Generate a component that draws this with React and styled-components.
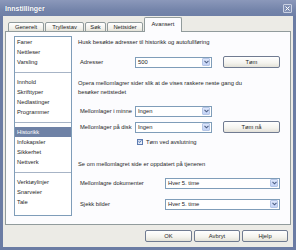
import styled, { createGlobalStyle } from "styled-components";

const GlobalStyle = createGlobalStyle`
  html, body {
    margin: 0;
    padding: 0;
    background: #ffffff;
  }

  body {
    font-family: "Liberation Sans", Arial, sans-serif;
    font-size: 5.8px;
    color: #1e1e1e;
  }

  * {
    box-sizing: border-box;
  }
`;

const Window = styled.div`
  width: 296px;
  height: 250px;
  display: flex;
  flex-direction: column;
  padding: 0 3px 3px;
  background: #6b7ca4;
`;

const TitleBar = styled.div`
  height: 16px;
  flex-shrink: 0;
  margin: 0 -3px;
  padding: 0 4px 0 5px;
  display: flex;
  align-items: center;
  justify-content: space-between;
  background: linear-gradient(#8b98ba, #7585ab 60%, #6e7fa6);
`;

const Title = styled.span`
  font-size: 7px;
  font-weight: bold;
  color: #ffffff;
  text-shadow: 0 0 1px #4b5b82;
`;

const CloseButton = styled.div`
  width: 9px;
  height: 9px;
  border: 1px solid #c9d0e2;
  border-radius: 1px;
  background: #8190b4;
  display: flex;
  align-items: center;
  justify-content: center;

  svg {
    width: 5px;
    height: 5px;
  }
`;

const Body = styled.div`
  flex: 1;
  display: flex;
  flex-direction: column;
  padding: 2px 2px 4px;
  background: #ecebe6;
`;

const TabStrip = styled.div`
  height: 14px;
  display: flex;
  align-items: flex-end;
  padding-left: 3px;
  position: relative;
  z-index: 1;
  margin-bottom: -1px;
`;

const Tab = styled.div`
  width: ${(p) => p.$width}px;
  height: ${(p) => (p.$active ? 15 : 10)}px;
  margin-right: ${(p) => (p.$active ? 0 : 1)}px;
  display: flex;
  align-items: center;
  justify-content: center;
  padding-bottom: ${(p) => (p.$active ? 2 : 0)}px;
  border: 1px solid #919b9c;
  border-bottom: ${(p) => (p.$active ? "none" : "1px solid #919b9c")};
  border-radius: 2px 2px 0 0;
  background: ${(p) =>
    p.$active ? "#fcfcfe" : "linear-gradient(#ffffff, #f1f0ea 70%, #e4e2d8)"};
  color: #222222;
  white-space: nowrap;
`;

const Panel = styled.div`
  height: 194px;
  display: flex;
  gap: 6px;
  padding: 4px 10px 0 8px;
  border: 1px solid #919b9c;
  background: #fcfcfe;
`;

const CategoryList = styled.div`
  width: 58px;
  height: 180px;
  flex-shrink: 0;
  border: 1px solid #7f9db9;
  background: #ffffff;
`;

const CategoryItem = styled.div`
  height: 10px;
  line-height: 10px;
  padding-left: 2px;
  white-space: nowrap;
  background: ${(p) => (p.$selected ? "#6f82a6" : "transparent")};
  color: ${(p) => (p.$selected ? "#ffffff" : "#1e1e1e")};
`;

const Separator = styled.div`
  height: 10px;
  display: flex;
  align-items: center;

  &::after {
    content: "";
    flex: 1;
    height: 1px;
    background: #a7b4c6;
  }
`;

const Content = styled.div`
  flex: 1;
  display: flex;
  flex-direction: column;
  padding-top: 2px;
`;

const Heading = styled.div`
  line-height: 9px;
  margin-top: ${(p) => p.$mt || 0}px;
  white-space: nowrap;
`;

const Row = styled.div`
  height: 12px;
  display: flex;
  align-items: center;
  margin-top: ${(p) => p.$mt || 0}px;
  padding-left: 2px;
`;

const Label = styled.span`
  width: ${(p) => p.$width}px;
  flex-shrink: 0;
  white-space: nowrap;
`;

const Select = styled.div`
  width: ${(p) => p.$width}px;
  height: 11px;
  display: flex;
  align-items: center;
  justify-content: space-between;
  padding: 1px 1px 1px 2px;
  border: 1px solid #7f9db9;
  background: #ffffff;
`;

const SelectArrow = styled.span`
  width: 8px;
  height: 8px;
  display: flex;
  align-items: center;
  justify-content: center;
  border: 1px solid #b5c6e6;
  border-radius: 1px;
  background: linear-gradient(#dde6fb, #c2d2f6);

  svg {
    width: 5px;
    height: 4px;
  }
`;

const Button = styled.button`
  width: ${(p) => p.$width || 57}px;
  height: 12px;
  margin-left: ${(p) => p.$ml || 0}px;
  padding: 0;
  font: inherit;
  color: #1e1e1e;
  border: 1px solid #707b91;
  border-radius: 2px;
  background: linear-gradient(#ffffff, #f4f3ee 60%, #e3e1d8);
`;

const CheckRow = styled.label`
  display: flex;
  align-items: center;
  gap: 3px;
  margin-top: ${(p) => p.$mt || 0}px;
  padding-left: 59px;
  height: 9px;
`;

const CheckBox = styled.span`
  width: 6px;
  height: 6px;
  display: flex;
  align-items: center;
  justify-content: center;
  border: 1px solid #5d7bb0;
  background: linear-gradient(135deg, #c9d5ea, #f2f5fb);

  svg {
    width: 5px;
    height: 5px;
  }
`;

const Footer = styled.div`
  display: flex;
  justify-content: flex-end;
  gap: 2px;
  margin-top: 5px;
  padding-right: 3px;
`;

const Chevron = () => (
  <svg viewBox="0 0 5 4">
    <path d="M0.5 0.8 L2.5 2.8 L4.5 0.8" fill="none" stroke="#4d5f84" strokeWidth="1.1" />
  </svg>
);

const Dropdown = ({ width, value }) => (
  <Select $width={width}>
    <span>{value}</span>
    <SelectArrow>
      <Chevron />
    </SelectArrow>
  </Select>
);

const tabs = [
  { name: "Generelt", width: 36 },
  { name: "Tryllestav", width: 39 },
  { name: "Søk", width: 21 },
  { name: "Nettsider", width: 36 },
  { name: "Avansert", width: 38, active: true },
];

const categories = [
  ["Faner", "Nettleser", "Varsling"],
  ["Innhold", "Skrifttyper", "Nedlastinger", "Programmer"],
  ["Historikk", "Infokapsler", "Sikkerhet", "Nettverk"],
  ["Verktøylinjer", "Snarveier", "Tale"],
];

export default function App() {
  return (
    <>
      <GlobalStyle />
      <Window>
        <TitleBar>
          <Title>Innstillinger</Title>
          <CloseButton>
            <svg viewBox="0 0 5 5">
              <path d="M0.5 0.5 L4.5 4.5 M4.5 0.5 L0.5 4.5" stroke="#ffffff" strokeWidth="1" />
            </svg>
          </CloseButton>
        </TitleBar>
        <Body>
          <TabStrip>
            {tabs.map((t) => (
              <Tab key={t.name} $width={t.width} $active={t.active}>
                {t.name}
              </Tab>
            ))}
          </TabStrip>
          <Panel>
            <CategoryList>
              {categories.map((group, i) => (
                <div key={i}>
                  {i > 0 && <Separator />}
                  {group.map((c) => (
                    <CategoryItem key={c} $selected={c === "Historikk"}>
                      {c}
                    </CategoryItem>
                  ))}
                </div>
              ))}
            </CategoryList>
            <Content>
              <Heading>Husk besøkte adresser til historikk og autofullføring</Heading>
              <Row $mt={9}>
                <Label $width={55}>Adresser</Label>
                <Dropdown width={77} value="500" />
                <Button $ml={11}>Tøm</Button>
              </Row>
              <Heading $mt={11}>
                Opera mellomlagrer sider slik at de vises raskere neste gang du
                <br />
                besøker nettstedet
              </Heading>
              <Row $mt={8}>
                <Label $width={55}>Mellomlager i minne</Label>
                <Dropdown width={77} value="Ingen" />
              </Row>
              <Row $mt={4}>
                <Label $width={55}>Mellomlager på disk</Label>
                <Dropdown width={77} value="Ingen" />
                <Button $ml={11}>Tøm nå</Button>
              </Row>
              <CheckRow $mt={4}>
                <CheckBox>
                  <svg viewBox="0 0 5 5">
                    <path d="M0.8 2.4 L2 3.7 L4.3 1" fill="none" stroke="#2f5aa8" strokeWidth="1" />
                  </svg>
                </CheckBox>
                Tøm ved avslutning
              </CheckRow>
              <Heading $mt={14}>Se om mellomlagret side er oppdatert på tjeneren</Heading>
              <Row $mt={8}>
                <Label $width={85}>Mellomlagre dokumenter</Label>
                <Dropdown width={115} value="Hver 5. time" />
              </Row>
              <Row $mt={9}>
                <Label $width={85}>Sjekk bilder</Label>
                <Dropdown width={115} value="Hver 5. time" />
              </Row>
            </Content>
          </Panel>
          <Footer>
            <Button $width={47}>OK</Button>
            <Button $width={46}>Avbryt</Button>
            <Button $width={46}>Hjelp</Button>
          </Footer>
        </Body>
      </Window>
    </>
  );
}
